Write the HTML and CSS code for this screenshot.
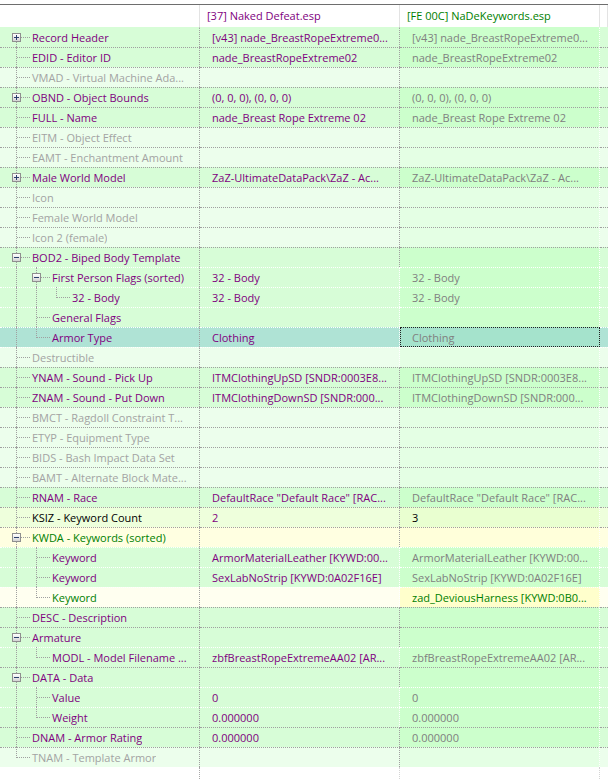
FILE: index.html
```html
<!DOCTYPE html>
<html lang="en">
<head>
<meta charset="utf-8">
<title>Record view</title>
<link rel="stylesheet" href="styles.css">
</head>
<body>
<div class="view">
  <div class="head">
    <div class="hc"></div>
    <div class="hc pu">[37] Naked Defeat.esp</div>
    <div class="hc gr">[FE 00C] NaDeKeywords.esp</div>
    <div class="hc"></div>
  </div>

  <div class="row n top">
    <div class="c1"><span class="g first"><i class="box plus"></i></span><span class="lbl pu">Record Header</span></div>
    <div class="c2 pu">[v43] nade_BreastRopeExtreme0...</div>
    <div class="c3 gy">[v43] nade_BreastRopeExtreme0...</div>
    <div class="c4"></div>
  </div>
  <div class="row n">
    <div class="c1"><span class="g tee"></span><span class="lbl pu">EDID - Editor ID</span></div>
    <div class="c2 pu">nade_BreastRopeExtreme02</div>
    <div class="c3 gy">nade_BreastRopeExtreme02</div>
    <div class="c4"></div>
  </div>
  <div class="row e">
    <div class="c1"><span class="g tee"></span><span class="lbl mu">VMAD - Virtual Machine Ada...</span></div>
    <div class="c2"></div><div class="c3"></div><div class="c4"></div>
  </div>
  <div class="row n">
    <div class="c1"><span class="g tee"><i class="box plus"></i></span><span class="lbl pu">OBND - Object Bounds</span></div>
    <div class="c2 pu">(0, 0, 0), (0, 0, 0)</div>
    <div class="c3 gy">(0, 0, 0), (0, 0, 0)</div>
    <div class="c4"></div>
  </div>
  <div class="row n">
    <div class="c1"><span class="g tee"></span><span class="lbl pu">FULL - Name</span></div>
    <div class="c2 pu">nade_Breast Rope Extreme 02</div>
    <div class="c3 gy">nade_Breast Rope Extreme 02</div>
    <div class="c4"></div>
  </div>
  <div class="row e">
    <div class="c1"><span class="g tee"></span><span class="lbl mu">EITM - Object Effect</span></div>
    <div class="c2"></div><div class="c3"></div><div class="c4"></div>
  </div>
  <div class="row e">
    <div class="c1"><span class="g tee"></span><span class="lbl mu">EAMT - Enchantment Amount</span></div>
    <div class="c2"></div><div class="c3"></div><div class="c4"></div>
  </div>
  <div class="row n">
    <div class="c1"><span class="g tee"><i class="box plus"></i></span><span class="lbl pu">Male World Model</span></div>
    <div class="c2 pu">ZaZ-UltimateDataPack\ZaZ - Ac...</div>
    <div class="c3 gy">ZaZ-UltimateDataPack\ZaZ - Ac...</div>
    <div class="c4"></div>
  </div>
  <div class="row e">
    <div class="c1"><span class="g tee"></span><span class="lbl mu">Icon</span></div>
    <div class="c2"></div><div class="c3"></div><div class="c4"></div>
  </div>
  <div class="row e">
    <div class="c1"><span class="g tee"></span><span class="lbl mu">Female World Model</span></div>
    <div class="c2"></div><div class="c3"></div><div class="c4"></div>
  </div>
  <div class="row e">
    <div class="c1"><span class="g tee"></span><span class="lbl mu">Icon 2 (female)</span></div>
    <div class="c2"></div><div class="c3"></div><div class="c4"></div>
  </div>
  <div class="row n">
    <div class="c1"><span class="g tee"><i class="box"></i></span><span class="lbl pu">BOD2 - Biped Body Template</span></div>
    <div class="c2"></div><div class="c3"></div><div class="c4"></div>
  </div>
  <div class="row n sub">
    <div class="c1"><span class="g pipe"></span><span class="g tee"><i class="box"></i></span><span class="lbl pu">First Person Flags (sorted)</span></div>
    <div class="c2 pu">32 - Body</div>
    <div class="c3 gy">32 - Body</div>
    <div class="c4"></div>
  </div>
  <div class="row n sub">
    <div class="c1"><span class="g pipe"></span><span class="g pipe"></span><span class="g end"></span><span class="lbl pu">32 - Body</span></div>
    <div class="c2 pu">32 - Body</div>
    <div class="c3 gy">32 - Body</div>
    <div class="c4"></div>
  </div>
  <div class="row n sub">
    <div class="c1"><span class="g pipe"></span><span class="g tee"></span><span class="lbl pu">General Flags</span></div>
    <div class="c2"></div><div class="c3"></div><div class="c4"></div>
  </div>
  <div class="row s sub">
    <div class="c1"><span class="g pipe"></span><span class="g end"></span><span class="lbl pu">Armor Type</span></div>
    <div class="c2 pu">Clothing</div>
    <div class="c3 gy focus">Clothing</div>
    <div class="c4"></div>
  </div>
  <div class="row e sub">
    <div class="c1"><span class="g tee"></span><span class="lbl mu">Destructible</span></div>
    <div class="c2"></div><div class="c3"></div><div class="c4"></div>
  </div>
  <div class="row n">
    <div class="c1"><span class="g tee"></span><span class="lbl pu">YNAM - Sound - Pick Up</span></div>
    <div class="c2 pu">ITMClothingUpSD [SNDR:0003E8...</div>
    <div class="c3 gy">ITMClothingUpSD [SNDR:0003E8...</div>
    <div class="c4"></div>
  </div>
  <div class="row n">
    <div class="c1"><span class="g tee"></span><span class="lbl pu">ZNAM - Sound - Put Down</span></div>
    <div class="c2 pu">ITMClothingDownSD [SNDR:000...</div>
    <div class="c3 gy">ITMClothingDownSD [SNDR:000...</div>
    <div class="c4"></div>
  </div>
  <div class="row e">
    <div class="c1"><span class="g tee"></span><span class="lbl mu">BMCT - Ragdoll Constraint T...</span></div>
    <div class="c2"></div><div class="c3"></div><div class="c4"></div>
  </div>
  <div class="row e">
    <div class="c1"><span class="g tee"></span><span class="lbl mu">ETYP - Equipment Type</span></div>
    <div class="c2"></div><div class="c3"></div><div class="c4"></div>
  </div>
  <div class="row e">
    <div class="c1"><span class="g tee"></span><span class="lbl mu">BIDS - Bash Impact Data Set</span></div>
    <div class="c2"></div><div class="c3"></div><div class="c4"></div>
  </div>
  <div class="row e">
    <div class="c1"><span class="g tee"></span><span class="lbl mu">BAMT - Alternate Block Mate...</span></div>
    <div class="c2"></div><div class="c3"></div><div class="c4"></div>
  </div>
  <div class="row n">
    <div class="c1"><span class="g tee"></span><span class="lbl pu">RNAM - Race</span></div>
    <div class="c2 pu">DefaultRace "Default Race" [RAC...</div>
    <div class="c3 gy">DefaultRace "Default Race" [RAC...</div>
    <div class="c4"></div>
  </div>
  <div class="row k">
    <div class="c1"><span class="g tee"></span><span class="lbl bk">KSIZ - Keyword Count</span></div>
    <div class="c2 pu">2</div>
    <div class="c3 bk">3</div>
    <div class="c4"></div>
  </div>
  <div class="row y">
    <div class="c1"><span class="g tee"><i class="box"></i></span><span class="lbl gr">KWDA - Keywords (sorted)</span></div>
    <div class="c2"></div><div class="c3"></div><div class="c4"></div>
  </div>
  <div class="row n sub">
    <div class="c1"><span class="g pipe"></span><span class="g tee"></span><span class="lbl pu">Keyword</span></div>
    <div class="c2 pu">ArmorMaterialLeather [KYWD:00...</div>
    <div class="c3 gy">ArmorMaterialLeather [KYWD:00...</div>
    <div class="c4"></div>
  </div>
  <div class="row n sub">
    <div class="c1"><span class="g pipe"></span><span class="g tee"></span><span class="lbl pu">Keyword</span></div>
    <div class="c2 pu">SexLabNoStrip [KYWD:0A02F16E]</div>
    <div class="c3 gy">SexLabNoStrip [KYWD:0A02F16E]</div>
    <div class="c4"></div>
  </div>
  <div class="row y2 sub">
    <div class="c1"><span class="g pipe"></span><span class="g end"></span><span class="lbl gr">Keyword</span></div>
    <div class="c2"></div>
    <div class="c3 gr">zad_DeviousHarness [KYWD:0B0...</div>
    <div class="c4"></div>
  </div>
  <div class="row n">
    <div class="c1"><span class="g tee"></span><span class="lbl pu">DESC - Description</span></div>
    <div class="c2"></div><div class="c3"></div><div class="c4"></div>
  </div>
  <div class="row n">
    <div class="c1"><span class="g tee"><i class="box"></i></span><span class="lbl pu">Armature</span></div>
    <div class="c2"></div><div class="c3"></div><div class="c4"></div>
  </div>
  <div class="row n sub">
    <div class="c1"><span class="g pipe"></span><span class="g end"></span><span class="lbl pu">MODL - Model Filename ...</span></div>
    <div class="c2 pu">zbfBreastRopeExtremeAA02 [AR...</div>
    <div class="c3 gy">zbfBreastRopeExtremeAA02 [AR...</div>
    <div class="c4"></div>
  </div>
  <div class="row n">
    <div class="c1"><span class="g tee"><i class="box"></i></span><span class="lbl pu">DATA - Data</span></div>
    <div class="c2"></div><div class="c3"></div><div class="c4"></div>
  </div>
  <div class="row n sub">
    <div class="c1"><span class="g pipe"></span><span class="g tee"></span><span class="lbl pu">Value</span></div>
    <div class="c2 pu">0</div>
    <div class="c3 gy">0</div>
    <div class="c4"></div>
  </div>
  <div class="row n sub">
    <div class="c1"><span class="g pipe"></span><span class="g end"></span><span class="lbl pu">Weight</span></div>
    <div class="c2 pu">0.000000</div>
    <div class="c3 gy">0.000000</div>
    <div class="c4"></div>
  </div>
  <div class="row n">
    <div class="c1"><span class="g tee"></span><span class="lbl pu">DNAM - Armor Rating</span></div>
    <div class="c2 pu">0.000000</div>
    <div class="c3 gy">0.000000</div>
    <div class="c4"></div>
  </div>
  <div class="row e">
    <div class="c1"><span class="g end"></span><span class="lbl mu">TNAM - Template Armor</span></div>
    <div class="c2"></div><div class="c3"></div><div class="c4"></div>
  </div>

  <div class="filler">
    <div class="f1"></div><div class="f2"></div><div class="f3"></div><div></div>
  </div>
</div>
</body>
</html>
```

FILE: styles.css
```css
* { box-sizing: border-box; }

html, body {
  margin: 0;
  background: #fff;
}

body {
  font-family: "Open Sans", "Noto Sans", sans-serif;
  font-size: 11px;
  color: #000;
}

.view {
  height: 779px;
  padding-top: 4px;
  display: flex;
  flex-direction: column;
  overflow: hidden;
}

/* column header */
.head {
  display: grid;
  grid-template-columns: 200px 200px 200px 8px;
  height: 23px;
  border-top: 1px solid #6e6e6e;
  background: #fff;
}
.hc {
  border-right: 1px solid #e3e3e3;
  padding-left: 7px;
  line-height: 22px;
  white-space: nowrap;
  overflow: hidden;
}

/* tree rows */
.row {
  display: grid;
  grid-template-columns: 200px 200px 200px 8px;
  height: 20px;
}
.row > div {
  border-top: 1px dotted #a0a0a0;
  border-right: 1px dotted #a0a0a0;
  line-height: 19px;
  white-space: nowrap;
  overflow: hidden;
}
.row.top > div { border-top-color: transparent; }
.row.sub > div { border-top-color: #fff; }
.row.sub > .c2 { border-right-color: #fff; }
.row > .c3 { border-right-color: #fff; }
.row > .c4 { border-right: 0; }

.row > .c2,
.row > .c3 { padding-left: 12px; }

.row > .c1 {
  display: flex;
  align-items: flex-start;
  padding-left: 6px;
  overflow: visible;
}

/* row colours: c1, c2, c4 share a tint; c3 is a touch stronger */
.n > .c1, .n > .c2, .n > .c4 { background: #d7fdd7; }
.n > .c3 { background: #ccffcc; }
.e > .c1, .e > .c2, .e > .c4 { background: #ecfeec; }
.e > .c3 { background: #e4ffe4; }
.s > .c1, .s > .c2, .s > .c4 { background: #afe3d5; }
.s > .c3 { background: #a5e3cc; }
.k > .c1, .k > .c2, .k > .c4 { background: #eeffdc; }
.k > .c3 { background: #e9ffd0; }
.y > .c1, .y > .c2, .y > .c4 { background: #ffffe1; }
.y > .c3 { background: #ffffda; }
.y2 > .c1, .y2 > .c2, .y2 > .c4 { background: #fffff0; }
.y2 > .c3 { background: #ffffcc; }

.row > .focus {
  outline: 1px dotted #222;
  outline-offset: -1px;
}

/* text colours */
.pu { color: #800080; }
.gy { color: #808080; }
.gr { color: #008000; }
.bk { color: #000; }
.mu { color: #a3a3a3; }

.lbl {
  padding-left: 6px;
  white-space: nowrap;
  overflow: hidden;
}

/* tree guide slots */
.g {
  position: relative;
  flex: none;
  width: 20px;
  height: 19px;
}
.g::before,
.g::after {
  content: "";
  position: absolute;
}
.g.pipe::before,
.g.tee::before {
  left: 10px;
  top: -1px;
  height: 20px;
  border-left: 1px dotted #a0a0a0;
}
.g.end::before {
  left: 10px;
  top: -1px;
  height: 11px;
  border-left: 1px dotted #a0a0a0;
}
.g.first::before {
  left: 10px;
  top: 9px;
  height: 10px;
  border-left: 1px dotted #a0a0a0;
}
.g.tee::after,
.g.end::after,
.g.first::after {
  left: 11px;
  top: 9px;
  width: 13px;
  border-top: 1px dotted #a0a0a0;
}

/* expand / collapse button */
.box {
  position: absolute;
  left: 6px;
  top: 5px;
  width: 9px;
  height: 9px;
  border: 1px solid #8f8f8f;
  background: linear-gradient(#ffffff, #d4d4d4);
  z-index: 1;
}
.box::before {
  content: "";
  position: absolute;
  left: 1px;
  top: 3px;
  width: 5px;
  height: 1px;
  background: #2b3f6c;
}
.box.plus::after {
  content: "";
  position: absolute;
  left: 3px;
  top: 1px;
  width: 1px;
  height: 5px;
  background: #2b3f6c;
}

/* empty area under the last row keeps the column lines */
.filler {
  flex: 1;
  display: grid;
  grid-template-columns: 200px 200px 200px 8px;
}
.f1 { border-right: 1px dotted #a8a8a8; }
.f2 { border-right: 1px dotted #d4d4d4; }
.f3 { border-right: 1px dotted #d4d4d4; }
```
